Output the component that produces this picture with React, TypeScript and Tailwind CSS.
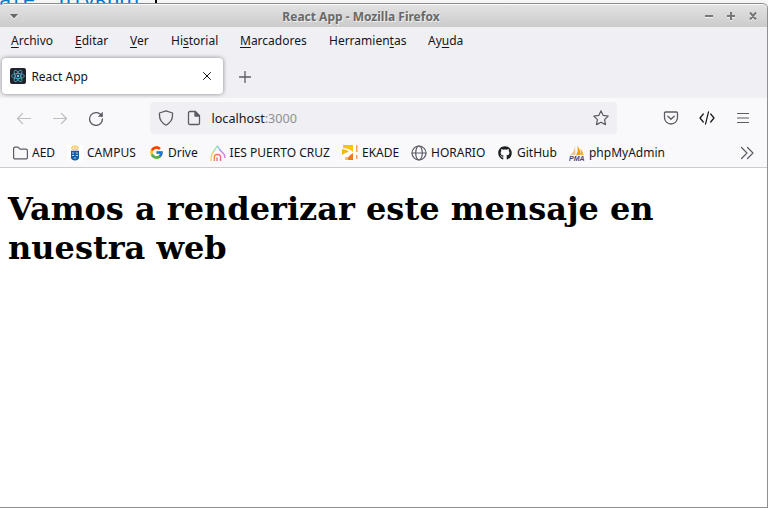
import React from "react";
import { FcGoogle } from "react-icons/fc";
import { FaGithub } from "react-icons/fa";

const menus: [string, string, string, string][] = [
  ["", "A", "rchivo", "w-[64px]"],
  ["", "E", "ditar", "w-[55px]"],
  ["", "V", "er", "w-[41px]"],
  ["Hi", "s", "torial", "w-[69px]"],
  ["", "M", "arcadores", "w-[89px]"],
  ["Herramien", "t", "as", "w-[99px]"],
  ["Ay", "u", "da", "w-[60px]"],
];

const stroke = {
  fill: "none",
  stroke: "currentColor",
  strokeLinecap: "round" as const,
  strokeLinejoin: "round" as const,
};

function ReactLogo() {
  return (
    <svg className="size-4 shrink-0" viewBox="0 0 16 16">
      <rect width="16" height="16" rx="2" fill="#20232a" />
      <g fill="none" stroke="#4fb3cb" strokeWidth=".8">
        <ellipse cx="8" cy="8" rx="6.4" ry="2.5" />
        <ellipse cx="8" cy="8" rx="6.4" ry="2.5" transform="rotate(60 8 8)" />
        <ellipse cx="8" cy="8" rx="6.4" ry="2.5" transform="rotate(120 8 8)" />
      </g>
      <circle cx="8" cy="8" r="1.2" fill="#61dafb" />
    </svg>
  );
}

function FolderIcon() {
  return (
    <svg className="size-4 text-[#5b5b66]" viewBox="0 0 16 16" {...stroke} strokeWidth="1.2">
      <path d="M1.600 12.500v-9A1.400 1.400 0 0 1 3 2.100h3l2 2h5.900a1.500 1.500 0 0 1 1.500 1.500v6.900a1.400 1.400 0 0 1-1.400 1.400H3a1.400 1.400 0 0 1-1.400-1.400z" />
    </svg>
  );
}

function CrestIcon() {
  return (
    <svg className="size-4" viewBox="0 0 16 16">
      <path fill="#fff" d="M0 0h16v16H0z" />
      <path d="M4 2.200 5.500 1 8 .2 10.500 1 12 2.200 11.300 5H4.700z" fill="#f6cd6c" />
      <path d="M5 3.400h6M6.500 1.500v2M9.500 1.500v2" stroke="#fff3c4" strokeWidth=".7" />
      <path d="M4 5.700h8v7q0 2.300-4 2.800-4-.5-4-2.800z" fill="#17579b" />
      <path d="M5 8h2.200M8.800 8H11M5 10.500h2.200M8.800 10.500H11M6.800 13h2.400" stroke="#c5d8ea" strokeWidth="1" />
    </svg>
  );
}

function SchoolIcon() {
  return (
    <svg className="size-4" viewBox="0 0 16 16" fill="none" strokeWidth="1.300">
      <path d="M2.800 7.500 7.500.8" stroke="#86e8a0" />
      <path d="M7.500.8 10 5.500" stroke="#82c5f4" />
      <path d="M9.500 4.500 13 8" stroke="#a68bef" />
      <path d="M12.500 7.500q2.500 2 2.500 5.500" stroke="#d77be8" />
      <path d="M3.500 7Q1 9 1 16" stroke="#f2cf5b" />
      <path d="M4.300 16v-4.500q.2-1.700 2.700-2" stroke="#f37a4b" />
      <path d="M7 9.500q3.500-.2 3.500 2.500v4M7 12.500V16" stroke="#f0607a" />
    </svg>
  );
}

function EkadeIcon() {
  return (
    <svg className="size-4" viewBox="0 0 16 16">
      <path fill="#fff" d="M0 0h16v16H0z" />
      <path d="M1 0h10v7Q7 3 1 3z" fill="#ffc400" />
      <path d="M0 4q5 .5 7 3Q4 7 0 10z" fill="#f3b619" />
      <path d="M11 8v7H5q0-3 6-7z" fill="#f07820" />
      <path d="M3 12h3v3H3z" fill="#f6be7b" />
      <path d="M14 0h1.500v7H14zM14 10h1.500v4H14z" fill="#eaa261" />
    </svg>
  );
}

function GlobeIcon() {
  return (
    <svg className="size-4 text-[#5b5b66]" viewBox="0 0 16 16" {...stroke} strokeWidth="1.200">
      <circle cx="8" cy="8" r="7" />
      <ellipse cx="8" cy="8" rx="3.300" ry="7" />
      <path d="M1 8h14" />
    </svg>
  );
}

function PmaIcon() {
  return (
    <svg className="size-4" viewBox="0 0 16 16">
      <path d="M6 0Q6 6 1 10.500 5 9.500 6.500 10z" fill="#f3c08a" />
      <path d="M8.500.5q1 5-1.500 10l4.500-.8q0-5-3-9.200z" fill="#f89c0e" />
      <path d="M11.500 3.500q2.500 3 3 6.800l-3.500-.2q1-3 .5-6.600z" fill="#f8a740" />
      <text x="0" y="15.500" fontSize="6.500" fontWeight="700" fontStyle="italic" fontFamily="Liberation Sans, sans-serif" fill="#45456d" textLength="15.500" lengthAdjust="spacingAndGlyphs">PMA</text>
    </svg>
  );
}

const bookmarks: { label: string; width: string; icon: React.ReactNode }[] = [
  { label: "AED", width: "w-[55px]", icon: <FolderIcon /> },
  { label: "CAMPUS", width: "w-[81px]", icon: <CrestIcon /> },
  { label: "Drive", width: "w-[61.6px]", icon: <FcGoogle className="size-[15px]" /> },
  { label: "IES PUERTO CRUZ", width: "w-[132.4px]", icon: <SchoolIcon /> },
  { label: "EKADE", width: "w-[69px]", icon: <EkadeIcon /> },
  { label: "HORARIO", width: "w-[86px]", icon: <GlobeIcon /> },
  { label: "GitHub", width: "w-[72px]", icon: <FaGithub className="size-[14px] text-[#1b1f23]" /> },
  { label: "phpMyAdmin", width: "w-[100px]", icon: <PmaIcon /> },
];

function TitleBar() {
  return (
    <div className="flex h-[24px] shrink-0 items-center rounded-t-[5px] border-t border-[#8b8b8b] bg-linear-to-b from-[#e3e3e3] to-[#cbcbcb] pl-[10px] pr-[9px] shadow-[inset_0_1px_0_#fbfbfb]">
      <svg className="mt-[2px] h-[5px] w-2 drop-shadow-[0_1px_0_#f5f5f5]" viewBox="0 0 8 5">
        <path d="M0 0h8L4 4.500z" fill="#666" />
      </svg>
      <div className="w-[686px] pt-[2px] text-center text-[12px] font-bold leading-4 text-[#696969] [text-shadow:1px_1px_0_#eee]">
        React App - Mozilla Firefox
      </div>
      <svg className="ml-auto h-[10px] w-[54px] shrink-0 drop-shadow-[0_1px_0_#f3f3f3]" viewBox="0 0 54 10" fill="none" stroke="#777" strokeWidth="2">
        <path d="M1 5h8M23 5h8M27 1v8M46 1.500l6 7M52 1.500l-6 7" />
      </svg>
    </div>
  );
}

function TabStrip() {
  return (
    <div className="flex h-[44px] items-start">
      <div className="mt-[4px] ml-[2px] flex h-[36px] w-[221px] items-center rounded-[4px] bg-white pl-2 pr-[11px] shadow-[0_0_4px_rgba(0,0,0,0.45)]">
        <ReactLogo />
        <span className="mt-px ml-[5.4px] text-[12px] leading-4">React App</span>
        <svg className="ml-auto size-[10px]" viewBox="0 0 10 10" {...stroke} strokeWidth="1">
          <path d="m1.500 1.500 7 7M8.500 1.500l-7 7" />
        </svg>
      </div>
      <svg className="mt-[17px] ml-[16px] size-3 text-[#5b5b66]" viewBox="0 0 12 12" {...stroke} strokeWidth="1.300">
        <path d="M6 .5v11M.5 6h11" />
      </svg>
    </div>
  );
}

function NavBar() {
  return (
    <div className="flex h-[40px] items-center pl-4 pr-4 text-[#5b5b66]">
      <svg className="size-4 shrink-0 text-[#bebec2]" viewBox="0 0 16 16" {...stroke} strokeWidth="1.200">
        <path d="M14.500 8.500h-13M6.500 3.500l-5 5 5 5" />
      </svg>
      <svg className="ml-5 size-4 shrink-0 text-[#bebec2]" viewBox="0 0 16 16" {...stroke} strokeWidth="1.200">
        <path d="M1.500 8.500h13M9.500 3.500l5 5-5 5" />
      </svg>
      <svg className="ml-5 size-4 shrink-0" viewBox="0 0 16 16" {...stroke} strokeWidth="1.300">
        <path d="M13.800 6.300A6.400 6.400 0 1 0 14.400 9" />
        <path d="M14.800 1.800v5H9.800z" fill="currentColor" stroke="none" />
      </svg>
      <div className="ml-[46px] flex h-8 w-[467px] shrink-0 items-center rounded-[4px] bg-[#f0f0f4] pl-2 pr-2">
        <svg className="size-4" viewBox="0 0 16 16" {...stroke} strokeWidth="1.300">
          <path d="M8 .8 14.500 3v2.500q0 6-6.500 9.700Q1.500 11.500 1.500 5.500V3z" />
        </svg>
        <svg className="ml-3 size-4" viewBox="0 0 16 16" {...stroke} strokeWidth="1.300">
          <path d="M3.800 1.500h5.500l4.200 4.200v7.500a1.300 1.300 0 0 1-1.300 1.300H3.800a1.300 1.300 0 0 1-1.300-1.300V2.800a1.300 1.300 0 0 1 1.300-1.300z" />
          <path d="M9 1.500V6h4.500z" fill="currentColor" />
        </svg>
        <span className="mt-[2px] ml-[9.500px] text-[12.600px] leading-[18px] text-[#15141a]">
          localhost<span className="text-[#8f8f96]">:3000</span>
        </span>
        <svg className="ml-auto size-4" viewBox="0 0 16 16" {...stroke} strokeWidth="1.200">
          <path d="m8 .8 2.200 4.600 5 .7-3.600 3.500.9 5L8 12.200l-4.500 2.400.9-5L.8 6.100l5-.7z" />
        </svg>
      </div>
      <svg className="ml-[46px] size-4 shrink-0" viewBox="0 0 16 16" {...stroke} strokeWidth="1.300">
        <path d="M2.500 2h11a1 1 0 0 1 1 1v4.500a6.500 6.500 0 0 1-13 0V3a1 1 0 0 1 1-1zM4.800 6.300 8 9.300l3.200-3" />
      </svg>
      <svg className="ml-5 size-4 shrink-0 text-[#15141a]" viewBox="0 0 16 16" {...stroke} strokeWidth="1.200">
        <path d="M4.300 4 1 8l3.300 4M11.700 4 15 8l-3.300 4M9.500 1.800l-3 12.400" />
      </svg>
      <svg className="ml-5 size-4 shrink-0" viewBox="0 0 16 16" {...stroke} strokeWidth="1.200">
        <path d="M2.500 3.500h11M2.500 8h11M2.500 12.500h11" />
      </svg>
    </div>
  );
}

function BookmarksBar() {
  return (
    <div className="flex h-[29px] items-center pl-3 pr-[13px] text-[12px] leading-4">
      {bookmarks.map((b) => (
        <div key={b.label} className={"flex shrink-0 items-center " + b.width}>
          <span className="mr-1 flex size-4 shrink-0 items-center justify-center">{b.icon}</span>
          <span className="whitespace-nowrap">{b.label}</span>
        </div>
      ))}
      <svg className="ml-auto size-[14px] text-[#5b5b66]" viewBox="0 0 14 14" {...stroke} strokeWidth="1.200">
        <path d="m1.500 1.500 5.500 5.500-5.500 5.500M7.500 1.500 13 7l-5.500 5.500" />
      </svg>
    </div>
  );
}

export default function App() {
  return (
    <div className="relative h-[508px] w-[768px] overflow-hidden bg-[#f5f5f5] pt-[3px] font-['Noto_Sans',sans-serif] text-[#15141a]">
      <div className="absolute -top-[12px] -left-[1px] flex h-[24px] items-center whitespace-pre font-['DejaVu_Sans_Mono',monospace] text-[20px] leading-6 text-[#0078c8]">
        ate &apos;divRoot&apos;<span className="-ml-[1px] h-[22px] w-[2px] bg-black" />
      </div>
      <div className="relative flex h-[505px] flex-col overflow-hidden rounded-t-[5px] border-r border-b border-[#8f8f8f] bg-white">
        <TitleBar />
        <div className="h-[71px] shrink-0 bg-[#f0f0f4]">
          <div className="flex h-[27px] items-center pl-[11px] text-[12px] leading-4">
            {menus.map(([before, key, after, width]) => (
              <span key={before + key + after} className={"shrink-0 " + width}>
                {before}
                <span className="underline decoration-1 underline-offset-2">{key}</span>
                {after}
              </span>
            ))}
          </div>
          <TabStrip />
        </div>
        <div className="h-[70px] shrink-0 border-b border-[#cccccc] bg-[#f9f9fb]">
          <NavBar />
          <BookmarksBar />
        </div>
        <main className="grow bg-white px-2 pt-[22px]">
          <h1 className="font-['DejaVu_Serif',serif] text-[32px] font-bold leading-[39px] text-black">
            Vamos a renderizar este mensaje en nuestra web
          </h1>
        </main>
      </div>
    </div>
  );
}
